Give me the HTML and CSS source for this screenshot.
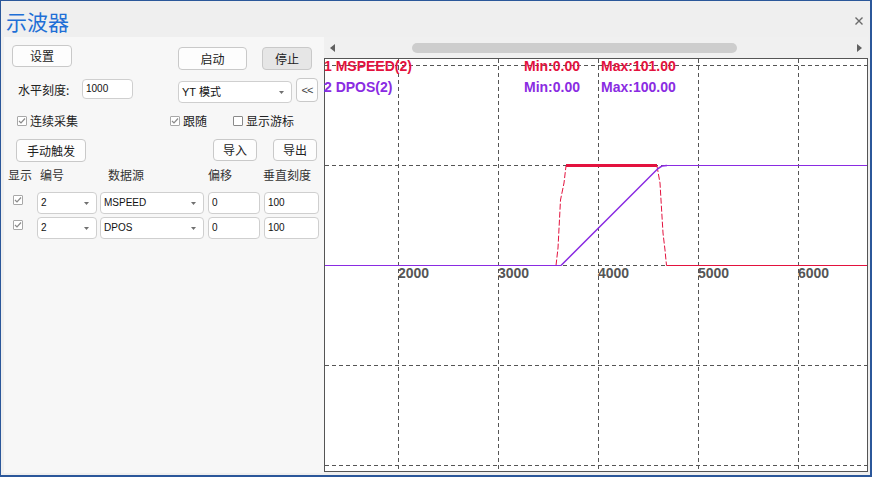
FILE: index.html
```html
<!DOCTYPE html>
<html lang="zh">
<head>
<meta charset="utf-8">
<title>示波器</title>
<link rel="stylesheet" href="styles.css">
</head>
<body>
<div class="window">
  <div class="titlebar">
    <span class="title">示波器</span>
    <svg class="close" width="8" height="8" viewBox="0 0 8 8"><path d="M0.5 0.5 L7.5 7.5 M7.5 0.5 L0.5 7.5" stroke="#6a6a6a" stroke-width="1.4" fill="none"/></svg>
  </div>
  <div class="main">
    <div class="panel">
      <div class="row r1">
        <div class="btn b-set">设置</div>
        <div class="btn b-start">启动</div>
        <div class="btn b-stop">停止</div>
      </div>
      <div class="row r2">
        <span class="lbl-scale">水平刻度:</span>
        <div class="field f-scale">1000</div>
        <div class="field select s-mode"><span class="mode-txt">YT 模式</span><svg class="caret" width="5" height="3" viewBox="0 0 5 3"><path d="M0 0 H5 L2.5 3 Z" fill="#707070"/></svg></div>
        <div class="btn b-collapse">&lt;&lt;</div>
      </div>
      <div class="row r3">
        <label class="chk c1"><span class="cb"><svg width="8" height="8" viewBox="0 0 8 8"><path d="M1 4 L3 6 L7 1.5" stroke="#8a8a8a" stroke-width="1.2" fill="none"/></svg></span>连续采集</label>
        <label class="chk c2"><span class="cb"><svg width="8" height="8" viewBox="0 0 8 8"><path d="M1 4 L3 6 L7 1.5" stroke="#8a8a8a" stroke-width="1.2" fill="none"/></svg></span>跟随</label>
        <label class="chk c3"><span class="cb off"></span>显示游标</label>
      </div>
      <div class="row r4">
        <div class="btn b-trig">手动触发</div>
        <div class="btn b-imp">导入</div>
        <div class="btn b-exp">导出</div>
      </div>
      <div class="row r5">
        <span class="h1">显示</span>
        <span class="h2">编号</span>
        <span class="h3">数据源</span>
        <span class="h4">偏移</span>
        <span class="h5">垂直刻度</span>
      </div>
      <div class="row trow">
        <span class="cb tcb"><svg width="8" height="8" viewBox="0 0 8 8"><path d="M1 4 L3 6 L7 1.5" stroke="#8a8a8a" stroke-width="1.2" fill="none"/></svg></span>
        <div class="field select s-num"><span>2</span><svg class="caret" width="5" height="3" viewBox="0 0 5 3"><path d="M0 0 H5 L2.5 3 Z" fill="#707070"/></svg></div>
        <div class="field select s-src"><span>MSPEED</span><svg class="caret" width="5" height="3" viewBox="0 0 5 3"><path d="M0 0 H5 L2.5 3 Z" fill="#707070"/></svg></div>
        <div class="field f-off">0</div>
        <div class="field f-vs">100</div>
      </div>
      <div class="row trow t2">
        <span class="cb tcb"><svg width="8" height="8" viewBox="0 0 8 8"><path d="M1 4 L3 6 L7 1.5" stroke="#8a8a8a" stroke-width="1.2" fill="none"/></svg></span>
        <div class="field select s-num"><span>2</span><svg class="caret" width="5" height="3" viewBox="0 0 5 3"><path d="M0 0 H5 L2.5 3 Z" fill="#707070"/></svg></div>
        <div class="field select s-src"><span>DPOS</span><svg class="caret" width="5" height="3" viewBox="0 0 5 3"><path d="M0 0 H5 L2.5 3 Z" fill="#707070"/></svg></div>
        <div class="field f-off">0</div>
        <div class="field f-vs">100</div>
      </div>
    </div>
    <div class="chartcol">
      <div class="hscroll">
        <svg class="arr-l" width="5" height="8" viewBox="0 0 5 8"><path d="M5 0 V8 L0 4 Z" fill="#606060"/></svg>
        <div class="thumb"></div>
        <svg class="arr-r" width="5" height="8" viewBox="0 0 5 8"><path d="M0 0 V8 L5 4 Z" fill="#606060"/></svg>
      </div>
      <svg class="chart" width="544" height="414" viewBox="0 0 544 414">
        <rect x="0.5" y="0.5" width="543" height="413" fill="#ffffff" stroke="#555555"/>
        <g stroke="#555555" stroke-width="1" stroke-dasharray="4 3" fill="none">
          <path d="M74.5 1 V413 M174.5 1 V413 M274.5 1 V413 M374.5 1 V413 M474.5 1 V413"/>
          <path d="M1 7.5 H543 M1 107.5 H543 M1 207.5 H543 M1 307.5 H543 M1 407.5 H543"/>
        </g>
        <g fill="none" stroke="#e3123e">
          <path d="M1 207.5 H232"/>
          <polyline points="232,207.5 234,190 236.5,142 240,125 242,108" stroke-dasharray="6 2"/>
          <polyline points="333,108 336,125 337,142 339,175 341,192 342.5,207.5" stroke-dasharray="6 2"/>
          <path d="M342.5 207.5 H543"/>
          <path d="M242 107.5 H333" stroke-width="3"/>
        </g>
        <g fill="none" stroke="#8a2be2">
          <path d="M1 207.5 H237"/>
          <polyline points="237,207.5 334,110.5 338,108 343,107.5" stroke-width="1.5"/>
          <path d="M343 107.5 H543"/>
        </g>
        <g class="legend">
          <text x="0" y="13" fill="#e3123e">1 MSPEED(2)</text>
          <text x="200" y="13" fill="#e3123e">Min:0.00</text>
          <text x="277" y="13" fill="#e3123e">Max:101.00</text>
          <text x="0" y="34" fill="#8a2be2">2 DPOS(2)</text>
          <text x="200" y="34" fill="#8a2be2">Min:0.00</text>
          <text x="277" y="34" fill="#8a2be2">Max:100.00</text>
        </g>
        <g class="axis" fill="#555555">
          <text x="74" y="220">2000</text>
          <text x="174" y="220">3000</text>
          <text x="274" y="220">4000</text>
          <text x="374" y="220">5000</text>
          <text x="474" y="220">6000</text>
        </g>
      </svg>
    </div>
  </div>
</div>
</body>
</html>
```

FILE: styles.css
```css
body {
  margin: 0;
  background: #ffffff;
}

.window {
  width: 872px;
  height: 477px;
  box-sizing: border-box;
  border: 1px solid #2b579a;
  border-right-width: 2px;
  border-bottom-width: 2px;
  background: #efefef;
  display: flex;
  flex-direction: column;
  font-family: "Noto Sans CJK SC", sans-serif;
  font-size: 12px;
  color: #222222;
}

.titlebar {
  height: 36px;
  flex: none;
  display: flex;
  align-items: center;
  justify-content: space-between;
  padding-left: 5px;
}

.title {
  font-size: 21px;
  line-height: 24px;
  color: #1f6fd6;
  padding-top: 3px;
}

.close {
  margin-right: 7px;
  margin-top: 3px;
}

.main {
  display: flex;
  height: 438px;
}

.panel {
  margin-left: 3px;
  width: 320px;
  height: 436px;
  background: #f7f7f7;
}

.row {
  display: flex;
  align-items: flex-start;
}

.btn {
  box-sizing: border-box;
  border: 1px solid #c9c9c9;
  border-radius: 4px;
  background: #fdfdfd;
  display: flex;
  align-items: center;
  justify-content: center;
  font-size: 12px;
  line-height: 1;
  color: #222222;
}

.field {
  box-sizing: border-box;
  border: 1px solid #cfcfcf;
  border-radius: 4px;
  background: #ffffff;
  display: flex;
  align-items: center;
  padding: 0 3px;
  font-family: "Liberation Sans", sans-serif;
  font-size: 10px;
  line-height: 1;
  color: #111111;
}

.select {
  justify-content: space-between;
  padding-right: 7px;
}

.caret {
  display: block;
  flex: none;
}

/* row 1 */
.r1 {
  margin-top: 8px;
  height: 25px;
}
.b-set {
  margin-left: 8px;
  width: 60px;
  height: 22px;
}
.b-start {
  margin-left: 106px;
  margin-top: 2px;
  width: 69px;
  height: 23px;
}
.b-stop {
  margin-left: 15px;
  margin-top: 2px;
  width: 50px;
  height: 23px;
  background: #e6e6e6;
}

/* row 2 */
.r2 {
  margin-top: 8px;
  height: 25px;
}
.lbl-scale {
  margin-left: 14px;
  width: 64px;
  height: 23px;
  line-height: 23px;
}
.f-scale {
  margin-top: 1px;
  width: 51px;
  height: 20px;
}
.s-mode {
  margin-left: 45px;
  margin-top: 3px;
  width: 114px;
  height: 22px;
}
.mode-txt {
  font-family: "Liberation Sans", "Noto Sans CJK SC", sans-serif;
  font-size: 11px;
}
.b-collapse {
  margin-left: 4px;
  width: 22px;
  height: 24px;
  font-family: "Liberation Sans", sans-serif;
  font-size: 11px;
  color: #444444;
  letter-spacing: -1px;
}

/* row 3 */
.r3 {
  margin-top: 7px;
  height: 22px;
  align-items: center;
}
.chk {
  display: flex;
  align-items: center;
  line-height: 1;
}
.c1 {
  margin-left: 13px;
  width: 153px;
}
.c2 {
  width: 63px;
}
.cb {
  box-sizing: border-box;
  width: 10px;
  height: 10px;
  border: 1px solid #a8a8a8;
  background: #ffffff;
  border-radius: 1px;
  margin-right: 3px;
  display: flex;
  align-items: center;
  justify-content: center;
  flex: none;
}
.cb.off {
  border-color: #8a8a8a;
}

/* row 4 */
.r4 {
  margin-top: 7px;
  height: 23px;
}
.b-trig {
  margin-left: 12px;
  width: 70px;
  height: 23px;
}
.b-imp {
  margin-left: 127px;
  width: 44px;
  height: 22px;
}
.b-exp {
  margin-left: 16px;
  width: 44px;
  height: 22px;
}

/* header */
.r5 {
  margin-top: 4px;
  height: 18px;
  line-height: 18px;
  color: #333333;
}
.h1 {
  margin-left: 4px;
  width: 32px;
}
.h2 {
  width: 68px;
}
.h3 {
  width: 100px;
}
.h4 {
  width: 55px;
}

/* table rows */
.trow {
  margin-top: 8px;
  height: 22px;
}
.trow.t2 {
  margin-top: 3px;
}
.tcb {
  margin-left: 9px;
  margin-top: 3px;
  margin-right: 0;
}
.s-num {
  margin-left: 14px;
  width: 60px;
  height: 22px;
}
.s-src {
  margin-left: 3px;
  width: 104px;
  height: 22px;
}
.f-off {
  margin-left: 4px;
  width: 52px;
  height: 22px;
}
.f-vs {
  margin-left: 4px;
  width: 55px;
  height: 22px;
}

/* chart column */
.chartcol {
  width: 544px;
  display: flex;
  flex-direction: column;
}

.hscroll {
  height: 21px;
  flex: none;
  display: flex;
  align-items: center;
  background: #f0f0f0;
}
.arr-l {
  display: block;
  margin-left: 6px;
}
.thumb {
  margin-left: 77px;
  width: 325px;
  height: 10px;
  border-radius: 5px;
  background: #cdcdcd;
}
.arr-r {
  display: block;
  margin-left: auto;
  margin-right: 6px;
}

.chart {
  display: block;
}

.legend text,
.axis text {
  font-family: "Liberation Sans", sans-serif;
  font-size: 14px;
  font-weight: bold;
}
```
